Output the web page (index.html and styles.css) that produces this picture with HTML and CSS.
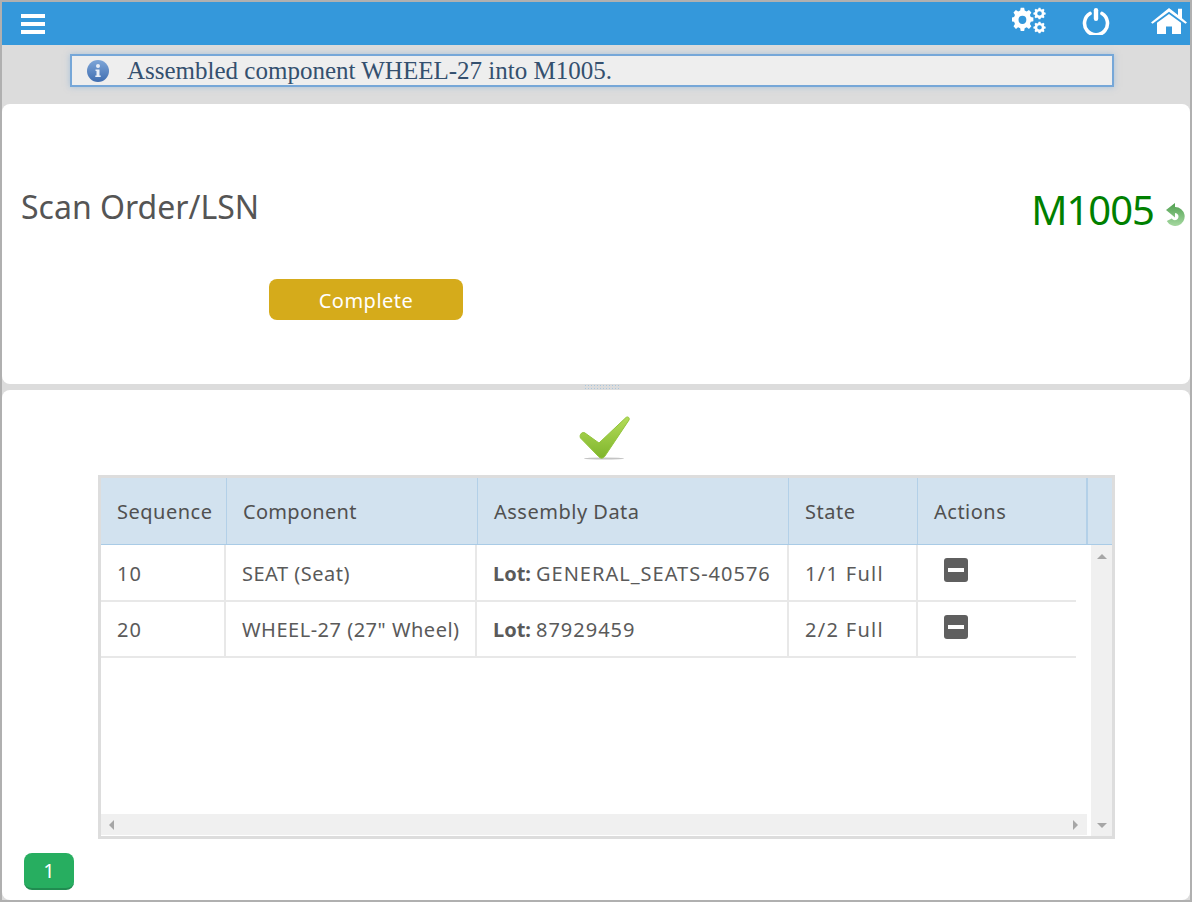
FILE: index.html
```html
<!DOCTYPE html>
<html lang="en">
  <head>
    <meta charset="UTF-8" />
    <title>Assembly</title>
    <link rel="stylesheet" href="styles.css">
  </head>
  <body>
    <div class="frame">
      <!-- Top bar -->
      <header class="topbar">
        <svg class="menu-icon" width="26" height="22" viewBox="0 0 26 22">
          <path fill="#fff" d="M0 0h24v4H0zM0 8h24v4H0zM0 16h24v4H0z" />
        </svg>
        <div class="topbar-right">
          <svg class="gears-icon" width="34" height="28" viewBox="0 0 36 28" preserveAspectRatio="none">
            <g fill="#fff">
              <path fill-rule="evenodd" d="M10 2h4l.6 3 2.3 1 2.6-1.700 2.800 2.800-1.700 2.600 1 2.300 3 .6v4l-3 .6-1 2.300 1.700 2.600-2.800 2.800-2.600-1.700-2.300 1-.6 3h-4l-.6-3-2.300-1-2.600 1.700-2.800-2.800 1.700-2.600-1-2.300-3-.6v-4l3-.6 1-2.300-1.700-2.600 2.800-2.800 2.600 1.700 2.300-1zM12 10.500a4.500 4.500 0 1 0 0 9 4.500 4.500 0 0 0 0-9z" transform="translate(0 -1) scale(.92)" />
              <path fill-rule="evenodd" d="M29 1l1 0 .5 1.500 1.200.5 1.400-.8 1.400 1.400-.8 1.400.5 1.200 1.500.5v2l-1.500.5-.5 1.200.8 1.400-1.400 1.400-1.400-.8-1.200.5-.5 1.500h-2l-.5-1.500-1.200-.5-1.400.8-1.400-1.400.8-1.400-.5-1.200-1.500-.5v-2l1.500-.5.5-1.200-.8-1.400 1.400-1.400 1.400.8 1.200-.5.5-1.500zM29 5a2.500 2.500 0 1 0 0 5 2.500 2.500 0 0 0 0-5z" transform="translate(1 0) scale(.97 .85)" />
              <path fill-rule="evenodd" d="M29 1l1 0 .5 1.500 1.200.5 1.400-.8 1.400 1.400-.8 1.400.5 1.200 1.500.5v2l-1.500.5-.5 1.200.8 1.400-1.400 1.400-1.400-.8-1.200.5-.5 1.500h-2l-.5-1.500-1.200-.5-1.400.8-1.400-1.400.8-1.400-.5-1.200-1.500-.5v-2l1.500-.5.5-1.200-.8-1.400 1.400-1.400 1.400.8 1.200-.5.5-1.500zM29 5a2.500 2.500 0 1 0 0 5 2.500 2.500 0 0 0 0-5z" transform="translate(1 14) scale(.97 .85)" />
            </g>
          </svg>
          <svg class="power-icon" width="28" height="28" viewBox="0 0 28 28">
            <path fill="none" stroke="#fff" stroke-width="3.600" stroke-linecap="round" d="M8 6.500a11.500 11.500 0 1 0 12 0" />
            <rect x="11.800" y="1" width="4.400" height="13" rx="2.200" fill="#fff" />
          </svg>
          <svg class="home-icon" width="36" height="28" viewBox="0 0 36 30" preserveAspectRatio="none">
            <path fill="#fff" d="M18 1L27 8.500V2h4v10l5 4.500-1.500 1.500L18 5 1.500 18 0 16.500z" />
            <path fill="#fff" fill-rule="evenodd" d="M18 7.500L30 17v12H21V21h-6v8H6V17z" />
          </svg>
        </div>
      </header>

      <!-- Status message -->
      <div class="message-band">
        <div class="message">
          <svg class="info-icon" width="24" height="24" viewBox="0 0 24 24">
            <defs>
              <linearGradient id="infoFill" x1="0" y1="0" x2="0" y2="1">
                <stop offset="0" stop-color="#7ea6d8" />
                <stop offset="1" stop-color="#3f6db0" />
              </linearGradient>
            </defs>
            <circle cx="12" cy="12" r="11" fill="url(#infoFill)" />
            <circle cx="12" cy="7" r="2" fill="#e8eef7" />
            <path fill="#e8eef7" d="M9.500 10.500h4v6h1.200v1.500H9.300v-1.500h1.200v-4.500h-1z" />
          </svg>
          <span>Assembled component WHEEL-27 into M1005.</span>
        </div>
      </div>

      <!-- Scan panel -->
      <section class="panel scan-panel">
        <div class="scan-row">
          <h1 class="scan-title">Scan Order/LSN</h1>
          <div class="order">
            <span class="order-no">M1005</span>
            <svg class="undo-icon" width="20" height="23" viewBox="0 0 20 23">
              <defs>
                <linearGradient id="undoFill" x1="0" y1="0" x2="0" y2="1">
                  <stop offset="0" stop-color="#4f9f4f" />
                  <stop offset="1" stop-color="#a5d8a0" />
                </linearGradient>
              </defs>
              <path fill="url(#undoFill)" d="M9 4a9.500 9.500 0 1 1-8.200 14l5-2.500a3.600 3.600 0 1 0 3.200-5.500v4.500L0 7 9 0z" />
            </svg>
          </div>
        </div>
        <button class="btn-complete">Complete</button>
      </section>

      <div class="splitter"><span class="grip"></span></div>

      <!-- Components panel -->
      <section class="panel list-panel">
        <svg class="check-icon" width="54" height="46" viewBox="0 0 54 46">
          <defs>
            <linearGradient id="checkFill" x1="0" y1="0" x2="0" y2="1">
              <stop offset="0" stop-color="#b4dc5a" />
              <stop offset="1" stop-color="#7fb52c" />
            </linearGradient>
          </defs>
          <ellipse cx="25" cy="42.500" rx="20" ry="1" fill="#c4c4c4" />
          <path fill="url(#checkFill)" stroke="#92c43a" stroke-width="1" stroke-linejoin="round" d="M1.500 18.500c1-2 3-2.500 4.500-1.500L20 27 47 1.500c2-1.500 4 .5 3 2.500L26 40c-1.500 2.500-4.500 3-6.500 .5L1.500 22c-.5-1-.5-2.500 0-3.500z" />
        </svg>

        <div class="grid-box">
          <div class="grid-head">
            <div class="hcell col-seq">Sequence</div>
            <div class="hcell col-comp">Component</div>
            <div class="hcell col-data">Assembly Data</div>
            <div class="hcell col-state">State</div>
            <div class="hcell col-act">Actions</div>
            <div class="hcell col-gap"></div>
          </div>
          <div class="grid-main">
            <div class="grid-left">
              <div class="grid-rows">
                <div class="row">
                  <div class="cell col-seq">10</div>
                  <div class="cell col-comp">SEAT (Seat)</div>
                  <div class="cell col-data"><b>Lot:</b> GENERAL_SEATS-40576</div>
                  <div class="cell col-state">1/1 Full</div>
                  <div class="cell col-act"><span class="remove"></span></div>
                </div>
                <div class="row">
                  <div class="cell col-seq">20</div>
                  <div class="cell col-comp">WHEEL-27 (27" Wheel)</div>
                  <div class="cell col-data"><b>Lot:</b> 87929459</div>
                  <div class="cell col-state">2/2 Full</div>
                  <div class="cell col-act"><span class="remove"></span></div>
                </div>
              </div>
              <div class="hscroll">
                <span class="arrow arrow-left"></span>
                <span class="arrow arrow-right"></span>
              </div>
            </div>
            <div class="vscroll">
              <span class="arrow arrow-up"></span>
              <span class="arrow arrow-down"></span>
            </div>
          </div>
        </div>

        <div class="pager"><button class="page-btn">1</button></div>
      </section>
    </div>
  </body>
</html>
```

FILE: styles.css
```css
html,
body {
  height: 100%;
}
body {
  margin: 0;
  font-family: "Noto Sans", "Open Sans", sans-serif;
  color: #555;
}
.frame {
  box-sizing: border-box;
  height: 902px;
  border: 2px solid #b0b0b0;
  background: #dcdcdc;
  display: flex;
  flex-direction: column;
  overflow: hidden;
}

/* top bar */
.topbar {
  height: 43px;
  flex: none;
  background: #3498db;
  display: flex;
  align-items: center;
  justify-content: space-between;
  padding: 0 3px 0 19px;
}
.menu-icon {
  margin-top: 3px;
}
.topbar-right {
  align-self: flex-start;
  display: flex;
  align-items: flex-start;
  gap: 36px;
}
.gears-icon {
  margin-top: 5px;
}
.power-icon {
  margin-top: 5px;
  margin-right: 5px;
}
.home-icon {
  margin-top: 5px;
}

/* message */
.message-band {
  height: 59px;
  flex: none;
  padding: 9px 76px 0 68px;
  box-sizing: border-box;
}
.message {
  height: 33px;
  box-sizing: border-box;
  border: 2px solid #76a7d8;
  background: #eeeeee;
  box-shadow: 0 0 6px rgba(118, 167, 216, 0.5);
  display: flex;
  align-items: center;
  padding-left: 14px;
  gap: 17px;
  font-family: "Liberation Serif", serif;
  font-size: 25px;
  color: #34506f;
}

/* panels */
.panel {
  background: #fff;
  border-radius: 8px;
}
.scan-panel {
  height: 280px;
  flex: none;
  padding: 0 4px 0 19px;
  box-sizing: border-box;
}
.scan-row {
  height: 175px;
  padding-top: 76px;
  box-sizing: border-box;
  display: flex;
  align-items: flex-start;
  justify-content: space-between;
}
.scan-title {
  margin: 0;
  font-size: 32px;
  font-weight: 400;
  line-height: 54px;
  color: #555;
}
.order {
  display: flex;
  align-items: center;
  gap: 12px;
}
.order-no {
  font-size: 40px;
  line-height: 60px;
  color: #008000;
  letter-spacing: -1px;
}
.undo-icon {
  margin-top: 8px;
}
.btn-complete {
  display: block;
  width: 194px;
  height: 41px;
  margin-left: 248px;
  border: 0;
  border-radius: 8px;
  background: #d5ab1b;
  color: #fff;
  font-family: inherit;
  font-size: 20px;
  letter-spacing: 0.5px;
  padding: 2px 0 0;
}
.splitter {
  height: 6px;
  flex: none;
  display: flex;
  justify-content: center;
  padding-left: 12px;
}
.grip {
  width: 37px;
  height: 5px;
  background-image: radial-gradient(#a9c6de 1px, transparent 1px);
  background-size: 3px 3px;
}
.list-panel {
  flex: 1;
  padding: 26px 75px 0 96px;
  display: flex;
  flex-direction: column;
}
.check-icon {
  flex: none;
  align-self: center;
  margin: 0 0 13px -1px;
  display: block;
}

/* grid */
.grid-box {
  height: 364px;
  flex: none;
  box-sizing: border-box;
  border: 3px solid #dddddd;
  display: flex;
  flex-direction: column;
}
.grid-head {
  height: 67px;
  flex: none;
  display: flex;
  background: #d2e2ef;
  border-bottom: 1px solid #a9cbe6;
  box-sizing: border-box;
}
.hcell {
  box-sizing: border-box;
  border-right: 1px solid #b3d0e8;
  padding-left: 16px;
  display: flex;
  align-items: center;
  font-size: 20px;
  letter-spacing: 0.5px;
  color: #505050;
}
.hcell.col-comp {
  letter-spacing: 0.3px;
}
.hcell.col-act {
  border-right-width: 2px;
}
.hcell.col-gap {
  border-right: 0;
}
.col-seq {
  width: 126px;
}
.col-comp {
  width: 251px;
}
.col-data {
  width: 311px;
}
.col-state {
  width: 129px;
}
.col-act {
  width: 170px;
}
.col-gap {
  flex: 1;
}
.grid-main {
  flex: 1;
  display: flex;
  min-height: 0;
}
.grid-left {
  flex: 1;
  display: flex;
  flex-direction: column;
  min-width: 0;
}
.grid-rows {
  flex: 1;
}
.row {
  display: flex;
  height: 56.500px;
  width: 975px;
  box-sizing: border-box;
  border-bottom: 2px solid #e8e8e8;
}
.cell {
  box-sizing: border-box;
  border-right: 2px solid #e8e8e8;
  padding: 2px 0 0 16px;
  display: flex;
  align-items: center;
  gap: 5px;
  font-size: 20px;
  color: #5a5a5a;
  white-space: nowrap;
}
.cell.col-seq {
  width: 125px;
  letter-spacing: 1px;
}
.cell.col-comp {
  width: 251px;
  letter-spacing: 0.5px;
}
.cell.col-data {
  width: 312px;
  letter-spacing: 1px;
}
.cell.col-state {
  width: 129px;
  letter-spacing: 1.3px;
}
.cell.col-act {
  flex: 1;
  border-right: 0;
  padding: 0 0 4px 26px;
}
.cell b {
  font-weight: 700;
  letter-spacing: 0;
}
.remove {
  width: 24px;
  height: 24px;
  border-radius: 3px;
  background: #5f5f5f;
  position: relative;
  display: block;
}
.remove::after {
  content: "";
  position: absolute;
  left: 4px;
  top: 10px;
  width: 16px;
  height: 4px;
  background: #fff;
}
.hscroll {
  height: 21px;
  flex: none;
  margin-right: 4px;
  background: #f0f0f0;
  display: flex;
  align-items: center;
  justify-content: space-between;
  padding: 0 9px 0 8px;
  margin-bottom: 1px;
}
.vscroll {
  width: 21px;
  flex: none;
  background: #f0f0f0;
  display: flex;
  flex-direction: column;
  align-items: center;
  justify-content: space-between;
  padding: 9px 0 8px;
  box-sizing: border-box;
}
.arrow {
  width: 0;
  height: 0;
  display: block;
  border-style: solid;
  border-color: transparent;
}
.arrow-left {
  border-width: 5px 5px 5px 0;
  border-right-color: #a6a6a6;
}
.arrow-right {
  border-width: 5px 0 5px 5px;
  border-left-color: #a6a6a6;
}
.arrow-up {
  border-width: 0 5px 5px;
  border-bottom-color: #a6a6a6;
}
.arrow-down {
  border-width: 5px 5px 0;
  border-top-color: #a6a6a6;
}

/* pager */
.pager {
  margin: 14px 0 0 -74px;
}
.page-btn {
  width: 50px;
  height: 37px;
  border: 0;
  border-bottom: 2px solid #208c50;
  border-radius: 8px;
  background: #27ae60;
  color: #fff;
  font-family: inherit;
  font-size: 20px;
  padding: 0;
}
```
